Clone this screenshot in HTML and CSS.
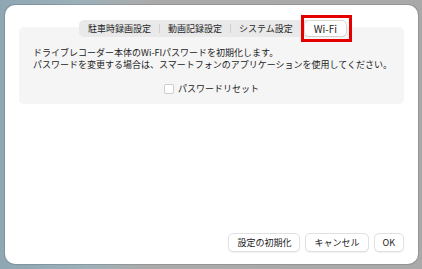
FILE: index.html
```html
<!DOCTYPE html>
<html lang="ja">
<head>
    <meta charset="UTF-8">
    <meta name="viewport" content="width=device-width, initial-scale=1.0">
    <title>Wi-Fi 設定</title>
    <link rel="stylesheet" href="styles.css">
</head>
<body>

    <div class="window">
        <!-- Tab bar -->
        <div class="tabs">
            <div class="tab">駐車時録画設定</div>
            <div class="tab">動画記録設定</div>
            <div class="tab">システム設定</div>
            <div class="tab active">Wi-Fi<span class="highlight"></span></div>
        </div>

        <!-- Wi-Fi panel -->
        <div class="panel">
            <p class="desc">ドライブレコーダー本体のWi-FIパスワードを初期化します。</p>
            <p class="desc">パスワードを変更する場合は、スマートフォンのアプリケーションを使用してください。</p>
            <label class="reset">
                <span class="checkbox"></span>
                <span>パスワードリセット</span>
            </label>
        </div>

        <!-- Bottom buttons -->
        <div class="actions">
            <button class="btn">設定の初期化</button>
            <button class="btn">キャンセル</button>
            <button class="btn">OK</button>
        </div>
    </div>

</body>
</html>
```

FILE: styles.css
```css
/* Basic Reset */
* {
    margin: 0;
    padding: 0;
    box-sizing: border-box;
}

body {
    font-family: "Noto Sans CJK JP", "Noto Sans", sans-serif;
    color: #222;
    height: 269px;
    padding: 5px 4px 5px 5px;
    background: linear-gradient(90deg, #8ea7b3 0, #9db0b9 20%, #aaaaaa 35%, #a9a9a9 100%);
    overflow: hidden;
}

/* Dialog window */
.window {
    height: 259px;
    background-color: #fff;
    border-radius: 10px;
    box-shadow: 0 0 0 1px rgba(0, 0, 0, 0.12);
    display: flex;
    flex-direction: column;
    padding: 15px 14px 12px 14px;
}

/* Segmented tab control */
.tabs {
    align-self: center;
    display: flex;
    align-items: center;
    height: 17px;
    padding: 1px;
    background-color: #e9e9e9;
    border-radius: 5px;
    position: relative;
    z-index: 1;
    margin-left: 3px;
}

.tab {
    position: relative;
    font-size: 9px;
    line-height: 15px;
    padding: 0 8px;
    color: #262626;
    white-space: nowrap;
}

.tab + .tab {
    margin-left: 1px;
}

/* thin separators between tabs */
.tab + .tab::before {
    content: "";
    position: absolute;
    left: -1px;
    top: 3px;
    height: 9px;
    width: 1px;
    background-color: #cfcfcf;
}

.tab.active::before {
    display: none;
}

.tab.active {
    background-color: #fff;
    border-radius: 4px;
    font-size: 10px;
    padding: 0 9px;
    margin-left: 4px;
    box-shadow: 0 0 0 0.5px #c9c9c9, 0 1px 1px rgba(0, 0, 0, 0.08);
}

/* red annotation box */
.highlight {
    position: absolute;
    top: -6px;
    bottom: -6px;
    left: -4px;
    right: -6px;
    border: 3px solid #e50000;
}

/* Content panel */
.panel {
    margin-top: -10px;
    height: 77px;
    background-color: #f5f5f5;
    border-radius: 5px;
    padding: 20px 14px 10px 14px;
}

.desc {
    font-size: 9px;
    line-height: 12px;
    white-space: nowrap;
}

.reset {
    display: flex;
    justify-content: center;
    align-items: center;
    gap: 4px;
    margin-top: 12px;
    font-size: 9px;
    line-height: 11px;
}

.checkbox {
    width: 10px;
    height: 10px;
    background-color: #fff;
    border: 1px solid #cdcdcd;
    border-radius: 2px;
}

/* Buttons */
.actions {
    margin-top: auto;
    display: flex;
    justify-content: flex-end;
    gap: 5px;
}

.btn {
    font-family: inherit;
    font-size: 9px;
    line-height: 17px;
    height: 19px;
    padding: 0 8px;
    color: #222;
    background-color: #fff;
    border: 1px solid #e0e0e0;
    border-radius: 5px;
    box-shadow: 0 1px 1px rgba(0, 0, 0, 0.06);
}
```
